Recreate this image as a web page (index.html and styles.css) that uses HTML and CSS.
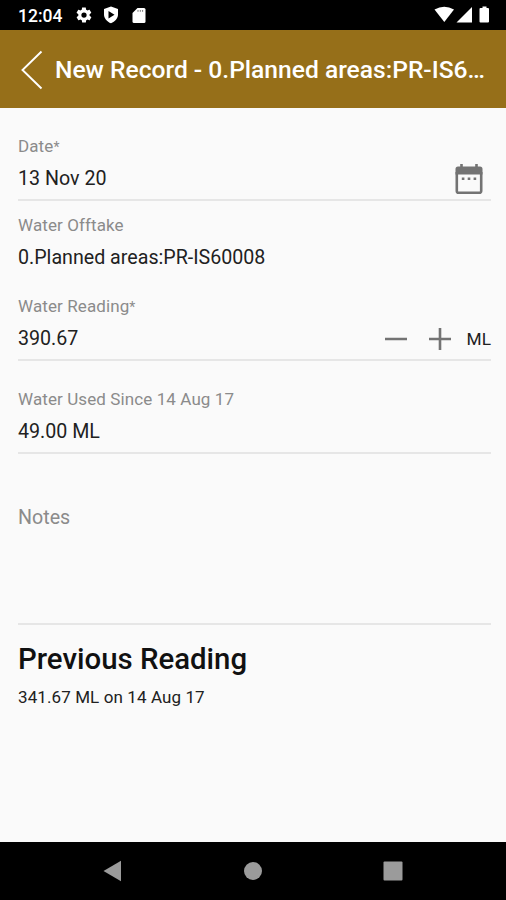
FILE: index.html
```html
<!DOCTYPE html>
<html lang="en">
<head>
  <meta charset="UTF-8">
  <meta name="viewport" content="width=device-width, initial-scale=1.0">
  <title>New Record</title>
  <link rel="stylesheet" href="styles.css">
</head>
<body>
  <div class="status-bar">
    <span class="clock">12:04</span>
    <svg class="gear" width="18" height="18" viewBox="0 0 24 24"><path fill="#fff" fill-rule="evenodd" d="M19.4 13c0-.3.1-.6.1-1s0-.7-.1-1l2.1-1.600c.2-.2.2-.4.1-.6l-2-3.500c-.1-.2-.4-.3-.6-.2l-2.500 1c-.5-.4-1.100-.7-1.700-1l-.4-2.600c0-.3-.2-.5-.5-.5h-4c-.3 0-.5.2-.5.4l-.4 2.700c-.6.2-1.100.6-1.700 1l-2.500-1c-.2-.1-.5 0-.6.2l-2 3.500c-.1.2-.1.500.1.600L4.500 11c0 .3-.1.600-.1 1s0 .7.1 1l-2.100 1.600c-.2.2-.3.400-.1.600l2 3.500c.1.200.4.300.6.200l2.500-1c.5.400 1.100.7 1.700 1l.4 2.600c0 .300.3.500.5.500h4c.3 0 .5-.2.5-.4l.4-2.700c.6-.2 1.100-.6 1.700-1l2.500 1c.2.100.5 0 .6-.2l2-3.500c.1-.2.1-.5-.1-.6L19.400 13zM12 15.500a3.500 3.500 0 1 1 0-7 3.500 3.500 0 0 1 0 7z"/></svg>
    <svg class="shield" width="16" height="18" viewBox="0 0 16 18"><path fill="#fff" fill-rule="evenodd" d="M8 .5L15 3v5.500c0 4-3 7.200-7 8.800-4-1.600-7-4.800-7-8.800V3zM5.500 5v7.500L11.500 8.700z"/></svg>
    <svg class="card" width="14" height="18" viewBox="0 0 14 18"><path fill="#fff" d="M5.500 1H12a1.500 1.500 0 0 1 1.500 1.500v12A1.500 1.500 0 0 1 12 16H2a1.500 1.500 0 0 1-1.500-1.500V6z"/><path stroke="#777" stroke-width="1" d="M6 3v1.800M8.300 3v1.800M10.600 3v1.800"/></svg>
    <svg class="signals" width="58" height="18" viewBox="0 0 58 18"><g fill="#fff"><path d="M.5 3.500Q10.300-2 20 3.500L10.300 16z"/><path d="M38 1v15.500H22.500z"/><path d="M48.500 2V.5h4V2H54a1 1 0 0 1 1 1v12.500a1 1 0 0 1-1 1h-7.500a1 1 0 0 1-1-1V3a1 1 0 0 1 1-1z"/></g></svg>
  </div>

  <header class="toolbar">
    <svg width="22" height="40" viewBox="0 0 22 40"><path fill="none" stroke="#fff" stroke-width="1.900" d="M20.500 1.500L1.500 20l19 18.500"/></svg>
    <h1>New Record - 0.Planned areas:PR-IS6…</h1>
  </header>

  <main class="form">
    <div class="field date">
      <div class="label">Date<span class="star">*</span></div>
      <div class="row">
        <span class="value">13 Nov 20</span>
        <svg class="calendar" width="30" height="32" viewBox="0 0 30 32"><path fill="none" stroke="#737373" stroke-width="2.600" d="M2.800 8v19a1.800 1.800 0 0 0 1.800 1.800h20.800a1.800 1.800 0 0 0 1.800-1.800V8"/><path fill="#737373" d="M1.500 10.500V5A2.500 2.500 0 0 1 4 2.500h2.200V0h2.600v2.500h12.400V0h2.600v2.500H26A2.500 2.500 0 0 1 28.500 5v5.500zM7.800 13.500h2.600v2.600H7.800zM13.700 13.500h2.600v2.600h-2.600zM19.600 13.500h2.600v2.600h-2.600z"/></svg>
      </div>
    </div>

    <div class="field offtake">
      <div class="label">Water Offtake</div>
      <div class="row"><span class="value">0.Planned areas:PR-IS60008</span></div>
    </div>

    <div class="field reading">
      <div class="label">Water Reading<span class="star">*</span></div>
      <div class="row">
        <span class="value">390.67</span>
        <svg class="stepper" width="68" height="24" viewBox="0 0 68 24"><path stroke="#737373" stroke-width="2.600" d="M1 12h22M45 12h22M56 1v22"/></svg>
        <span class="unit">ML</span>
      </div>
    </div>

    <div class="field used">
      <div class="label">Water Used Since 14 Aug 17</div>
      <div class="row"><span class="value">49.00 ML</span></div>
    </div>

    <div class="notes">Notes</div>

    <h2>Previous Reading</h2>
    <p class="previous">341.67 ML on 14 Aug 17</p>
  </main>

  <nav class="nav-bar">
    <svg width="20" height="22" viewBox="0 0 20 22"><path fill="#9b9b9b" d="M18 .8v20.400L.5 11z"/></svg>
    <svg width="20" height="22" viewBox="0 0 20 22"><circle cx="10" cy="11" r="9" fill="#9b9b9b"/></svg>
    <svg width="20" height="22" viewBox="0 0 20 22"><rect x=".5" y="1.500" width="19" height="19" rx="1" fill="#9b9b9b"/></svg>
  </nav>
</body>
</html>
```
FILE: styles.css
```css
* { box-sizing: border-box; }
body { margin: 0; height: 900px; display: flex; flex-direction: column; background: #fafafa; color: #212121; font-family: Roboto, sans-serif; overflow: hidden; }
svg { display: block; flex: none; }

.status-bar { height: 30px; display: flex; align-items: center; padding: 0 14px 0 18px; background: #000; color: #fff; }
.clock { font-size: 17.5px; font-weight: 500; line-height: 20px; margin-top: 2px; }
.gear { margin-left: 13px; }
.shield { margin-left: 10px; }
.card { margin-left: 13px; margin-top: 2px; }
.signals { margin-left: auto; }

.toolbar { height: 78px; display: flex; align-items: center; padding: 2px 16px 0 21px; background: #966f19; color: #fff; }
.toolbar h1 { margin: 0 0 0 12px; font-size: 24.6px; font-weight: 500; line-height: 30px; white-space: nowrap; }

.form { flex: 1; padding: 28px 15px 0 18px; }
.label { font-size: 17px; line-height: 20px; letter-spacing: 0.1px; color: #8b8b8b; }
.star { font-size: 14px; }
.row { display: flex; align-items: center; height: 44px; }
.value { font-size: 19.65px; line-height: 24px; }
.field { border-bottom: 2px solid #e6e6e6; }
.field.date { height: 65px; }
.calendar { margin: 1px 7px 0 auto; }
.field.offtake { height: 80px; padding-top: 14px; border-bottom: none; }
.field.offtake .row, .field.used .row { height: 46px; }
.field.reading { height: 80px; padding-top: 15px; }
.stepper { margin-left: auto; }
.unit { margin-left: 15px; font-size: 17.3px; }
.field.used { height: 93px; padding-top: 28px; }

.notes { height: 171px; padding-top: 52px; border-bottom: 2px solid #e6e6e6; font-size: 19.65px; line-height: 24px; color: #8b8b8b; }
h2 { margin: 16px 0 0; font-size: 29.4px; font-weight: 500; line-height: 36px; color: #111; }
.previous { margin: 10px 0 0; font-size: 17px; line-height: 20px; letter-spacing: 0.1px; }

.nav-bar { height: 58px; display: flex; align-items: center; justify-content: space-between; padding: 0 103px; background: #000; }
```
